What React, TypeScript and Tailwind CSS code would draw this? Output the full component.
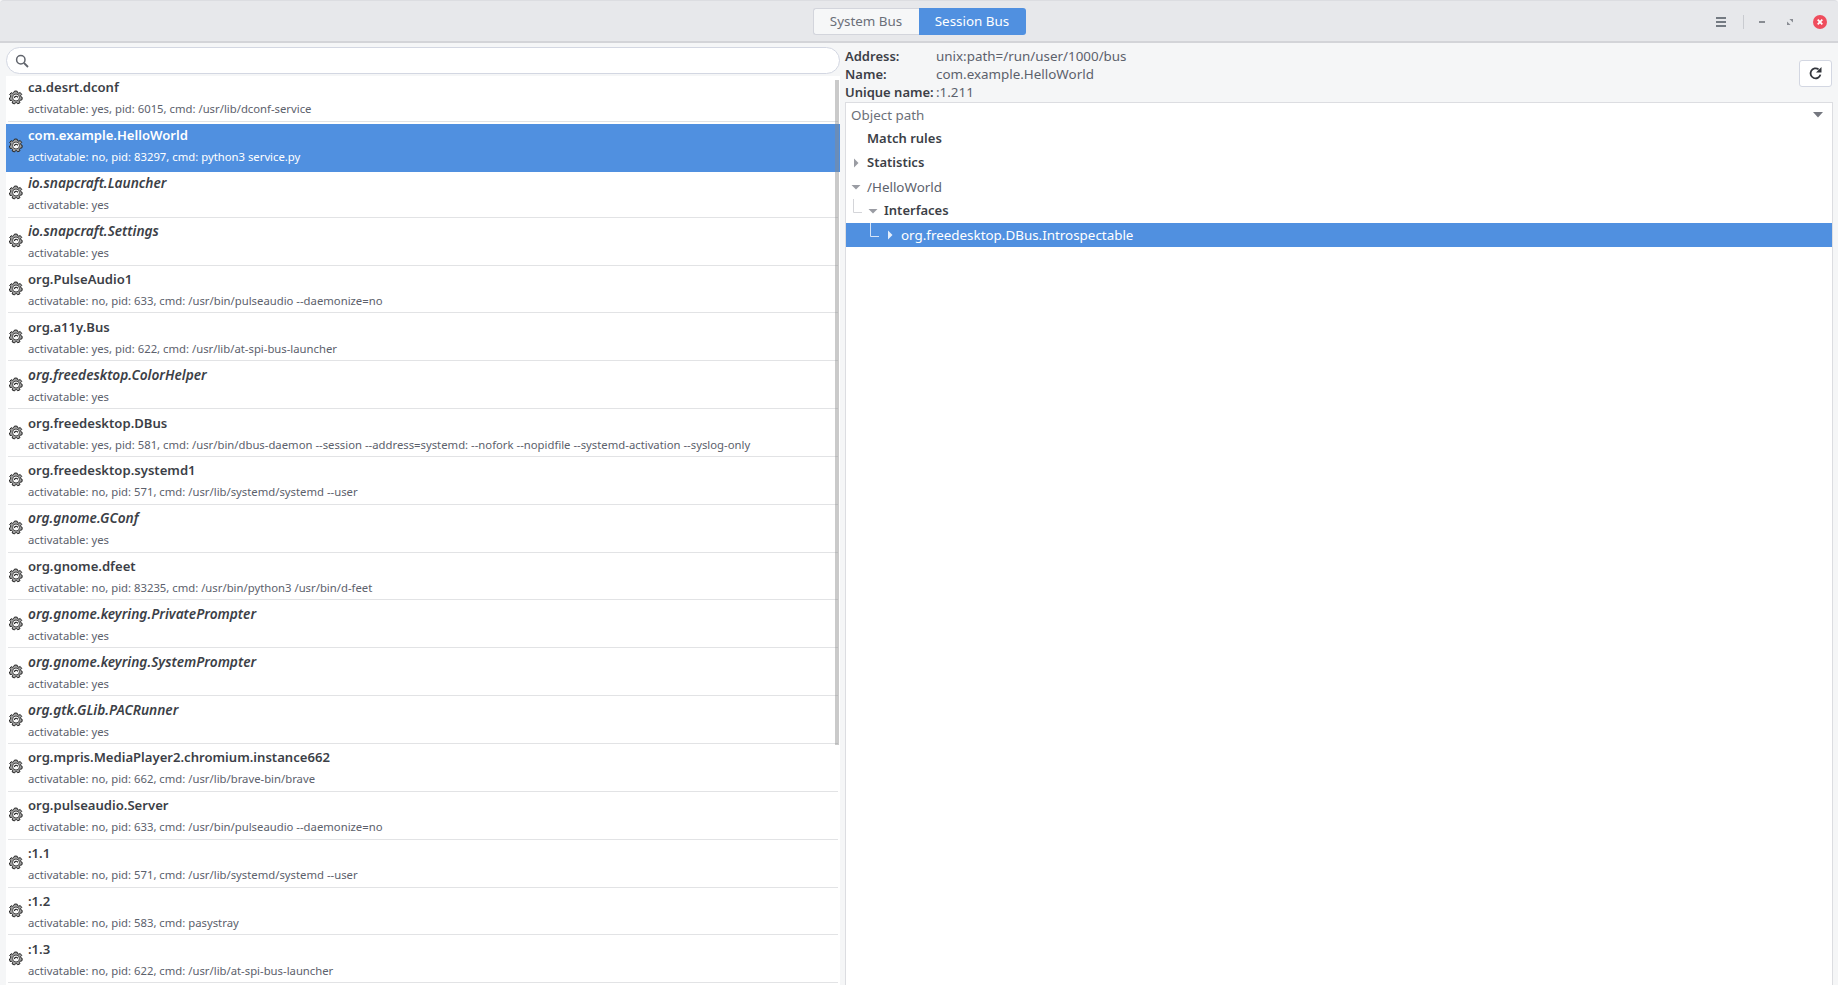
import React from 'react';

const FONT = 'font-["Noto_Sans",sans-serif]';

type BusRow = { name: string; info: string; italic?: boolean; selected?: boolean };

const rows: BusRow[] = [
  { name: 'ca.desrt.dconf', info: 'activatable: yes, pid: 6015, cmd: /usr/lib/dconf-service' },
  { name: 'com.example.HelloWorld', info: 'activatable: no, pid: 83297, cmd: python3 service.py', selected: true },
  { name: 'io.snapcraft.Launcher', info: 'activatable: yes', italic: true },
  { name: 'io.snapcraft.Settings', info: 'activatable: yes', italic: true },
  { name: 'org.PulseAudio1', info: 'activatable: no, pid: 633, cmd: /usr/bin/pulseaudio --daemonize=no' },
  { name: 'org.a11y.Bus', info: 'activatable: yes, pid: 622, cmd: /usr/lib/at-spi-bus-launcher' },
  { name: 'org.freedesktop.ColorHelper', info: 'activatable: yes', italic: true },
  { name: 'org.freedesktop.DBus', info: 'activatable: yes, pid: 581, cmd: /usr/bin/dbus-daemon --session --address=systemd: --nofork --nopidfile --systemd-activation --syslog-only' },
  { name: 'org.freedesktop.systemd1', info: 'activatable: no, pid: 571, cmd: /usr/lib/systemd/systemd --user' },
  { name: 'org.gnome.GConf', info: 'activatable: yes', italic: true },
  { name: 'org.gnome.dfeet', info: 'activatable: no, pid: 83235, cmd: /usr/bin/python3 /usr/bin/d-feet' },
  { name: 'org.gnome.keyring.PrivatePrompter', info: 'activatable: yes', italic: true },
  { name: 'org.gnome.keyring.SystemPrompter', info: 'activatable: yes', italic: true },
  { name: 'org.gtk.GLib.PACRunner', info: 'activatable: yes', italic: true },
  { name: 'org.mpris.MediaPlayer2.chromium.instance662', info: 'activatable: no, pid: 662, cmd: /usr/lib/brave-bin/brave' },
  { name: 'org.pulseaudio.Server', info: 'activatable: no, pid: 633, cmd: /usr/bin/pulseaudio --daemonize=no' },
  { name: ':1.1', info: 'activatable: no, pid: 571, cmd: /usr/lib/systemd/systemd --user' },
  { name: ':1.2', info: 'activatable: no, pid: 583, cmd: pasystray' },
  { name: ':1.3', info: 'activatable: no, pid: 622, cmd: /usr/lib/at-spi-bus-launcher' },
];

const Gear = () => (
  <svg width="14" height="15" viewBox="0 0 14 15" className="shrink-0">
    <path
      d="M5.600 1l2.600.2.3 1.400 1.400.6 1.300-.7 1.500 1.900-1 1 .3 1.500 1.300.7-.5 2.400-1.500.1-.8 1.200.5 1.400-2.200 1.100-1-1.100-1.500.1-.9 1.200-2.200-1 .3-1.500-1-1.100-1.400.1L.4 8l1.200-.8.1-1.500-1-1.100L2.100 2.700l1.300.6 1.300-.8z"
      fill="#a0a0a0"
      stroke="#262626"
      strokeWidth="1"
      strokeLinejoin="round"
    />
    <circle cx="7" cy="7.500" r="3.500" fill="#fafafa" stroke="#3a3a3a" strokeWidth="0.9" />
    <path d="M5.200 8a1.900 1.900 0 0 1 3.600-.6" fill="none" stroke="#222" strokeWidth="1.100" />
  </svg>
);

const Arrow = ({ open, color = '#9a9ca3' }: { open?: boolean; color?: string }) => (
  <svg width="10" height="10" viewBox="0 0 10 10" className="shrink-0">
    {open ? <path d="M0.500 3h9L5 7.500z" fill={color} /> : <path d="M3 0.500v9L7.500 5z" fill={color} />}
  </svg>
);

const Corner = ({ color = '#d4d5d9' }: { color?: string }) => (
  <svg width="9" height="24" viewBox="0 0 9 24" className="shrink-0">
    <path d="M0.500 0v13.500H9" fill="none" stroke={color} strokeWidth="1" />
  </svg>
);

const ServiceRow = ({ row, first }: { row: BusRow; first: boolean }) => {
  if (row.selected) {
    return (
      <div className="relative z-10 flex h-[47.5px] mt-[2px] mb-[-1.65px] items-center bg-[#5090e0] text-white">
        <div className="flex w-[17px] justify-end pb-[4px]">
          <Gear />
        </div>
        <div className="pl-[5px] mt-[-6px]">
          <div className="text-[13.1px] font-semibold leading-[20px] whitespace-nowrap">{row.name}</div>
          <div className="text-[11.3px] leading-[16px] mt-[4px] whitespace-nowrap">{row.info}</div>
        </div>
      </div>
    );
  }
  return (
    <div className={`flex items-center ${first ? 'h-[46px]' : 'h-[47.85px]'} ml-[2px] mr-[2px] border-b border-[#e2e3e5]`}>
      <div className={`flex w-[15px] justify-end ${first ? 'pb-[2px]' : 'pb-[1px]'}`}>
        <Gear />
      </div>
      <div className={`pl-[5px] ${first ? 'mt-[-4px]' : 'mt-[0px]'}`}>
        <div className={`font-semibold leading-[20px] text-[#3c3f47] whitespace-nowrap ${row.italic ? 'italic text-[13.7px]' : 'text-[13.1px]'}`}>{row.name}</div>
        <div className="text-[11.3px] leading-[16px] mt-[4px] text-[#5c616c] whitespace-nowrap">{row.info}</div>
      </div>
    </div>
  );
};

export default function App() {
  return (
    <div className={`flex h-[985px] w-[1838px] flex-col overflow-hidden bg-[#f5f6f7] ${FONT}`}>
      <header className="relative flex h-[43px] shrink-0 items-center justify-center rounded-t-[4px] border-t border-[#dcdde1] border-b-2 border-b-[#d3d4d8] bg-[#e7e8eb]">
        <div className="flex h-[27px] text-[13.4px]">
          <div className="flex w-[106px] items-center justify-center rounded-l-[3px] border border-r-0 border-[#d3d5dc] bg-[#f6f7f8] text-[#6b6f78]">System Bus</div>
          <div className="flex w-[107px] items-center justify-center rounded-r-[3px] bg-[#5090e0] text-white">Session Bus</div>
        </div>
        <div className="absolute right-[11px] top-0 flex h-[41px] items-center">
          <svg width="12" height="12" viewBox="0 0 12 12" className="mr-[16px]">
            <path d="M1 2h10M1 6h10M1 10h10" stroke="#4f5560" strokeWidth="1.6" />
          </svg>
          <div className="mr-[14px] h-[14px] w-px bg-[#c9cbd0]" />
          <svg width="8" height="8" viewBox="0 0 8 8" className="mr-[20px]">
            <path d="M1 4h6" stroke="#70747c" strokeWidth="1.6" />
          </svg>
          <svg width="8" height="8" viewBox="0 0 8 8" className="mr-[19px]">
            <path d="M3.400 1H7v3.600zM1 3.400V7h3.600z" fill="#8a8d94" />
          </svg>
          <svg width="14" height="14" viewBox="0 0 14 14">
            <circle cx="7" cy="7" r="7" fill="#ef4d5d" />
            <path d="M4.700 4.700l4.600 4.600M9.300 4.700l-4.600 4.600" stroke="#fff" strokeWidth="1.8" />
          </svg>
        </div>
      </header>

      <div className="flex min-h-0 flex-1">
        {/* service list */}
        <div className="flex w-[845px] shrink-0 flex-col pl-[6px] pr-[5px] pt-[4px]">
          <div className="flex h-[27px] shrink-0 items-center rounded-full border border-[#d3d7e2] bg-white pl-[8px]">
            <svg width="14" height="14" viewBox="0 0 14 14" fill="none">
              <circle cx="5.800" cy="5.800" r="4.200" stroke="#60646c" strokeWidth="1.5" />
              <path d="M9 9l4 4" stroke="#60646c" strokeWidth="1.8" />
            </svg>
          </div>
          <div className="relative mt-[2px] min-h-0 flex-1 overflow-hidden bg-white">
            {rows.map((row, i) => (
              <ServiceRow key={row.name} row={row} first={i === 0} />
            ))}
            <div className="absolute right-[1px] top-[4px] z-20 h-[665px] w-[4px] bg-[#8a8a8a]/45" />
          </div>
        </div>

        {/* details */}
        <div className="flex min-w-0 flex-1 flex-col pr-[5px]">
          <div className="relative h-[59px] shrink-0 pt-[4px] text-[13.4px] leading-[18px] text-[#5c616c]">
            <div className="flex"><span className="w-[91px] whitespace-nowrap text-[13px] font-semibold text-[#3c3f47]">Address:</span><span>unix:path=/run/user/1000/bus</span></div>
            <div className="flex"><span className="w-[91px] whitespace-nowrap text-[13px] font-semibold text-[#3c3f47]">Name:</span><span>com.example.HelloWorld</span></div>
            <div className="flex"><span className="w-[91px] whitespace-nowrap text-[13px] font-semibold text-[#3c3f47]">Unique name:</span><span>:1.211</span></div>
            <button className="absolute right-[1px] top-[17px] flex h-[27px] w-[33px] items-center justify-center rounded-[3px] border border-[#d3d7e2] bg-white">
              <svg width="15" height="15" viewBox="0 0 15 15" fill="none">
                <path d="M12.400 8.600A5 5 0 1 1 10.600 3.400" stroke="#33363c" strokeWidth="1.8" />
                <path d="M13.500 1v5.500H8z" fill="#33363c" />
              </svg>
            </button>
          </div>
          <div className="min-h-0 flex-1 border border-b-0 border-[#dcdde1] bg-white text-[13.4px]">
            <div className="flex h-[24px] items-center justify-between pl-[5px] pr-[8px] text-[#6b6f78]">
              <span>Object path</span>
              <svg width="12" height="8" viewBox="0 0 12 8"><path d="M1 1h10L6 6.500z" fill="#74777f" /></svg>
            </div>
            <div className="flex h-[24px] items-center pl-[21px] text-[13px] font-semibold text-[#3c3f47]">Match rules</div>
            <div className="flex h-[24px] items-center pl-[5px] text-[13px] font-semibold text-[#3c3f47]">
              <Arrow />
              <span className="pl-[6px]">Statistics</span>
            </div>
            <div className="flex h-[24px] items-center pl-[5px] text-[#5c616c]">
              <Arrow open />
              <span className="pl-[6px]">/HelloWorld</span>
            </div>
            <div className="flex h-[24px] items-center pl-[7px] text-[13px] font-semibold text-[#3c3f47]">
              <Corner />
              <span className="pl-[6px]"><Arrow open /></span>
              <span className="pl-[6px]">Interfaces</span>
            </div>
            <div className="flex h-[23.5px] items-center bg-[#5090e0] pl-[24px] text-white">
              <Corner color="#d6e4f7" />
              <span className="pl-[6px]"><Arrow color="#e4eefb" /></span>
              <span className="pl-[6px]">org.freedesktop.DBus.Introspectable</span>
            </div>
          </div>
        </div>
      </div>
    </div>
  );
}
